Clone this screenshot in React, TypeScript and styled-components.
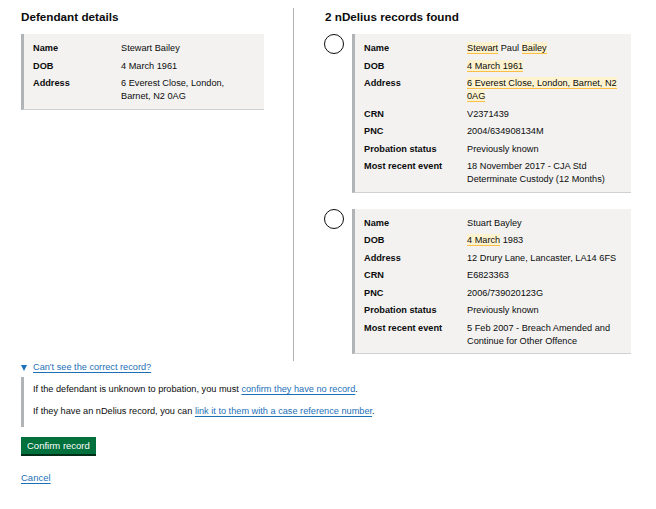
import React from "react";
import styled, { createGlobalStyle } from "styled-components";

const Global = createGlobalStyle`
  html, body { margin: 0; padding: 0; background: #ffffff; }
  body {
    font-family: "Liberation Sans", Arial, sans-serif;
    color: #0b0c0c;
    -webkit-font-smoothing: antialiased;
  }
`;

const Page = styled.div`
  padding: 8px 25px 24px 21px;
`;

const Columns = styled.div`
  display: grid;
  grid-template-columns: 273px 1fr;
`;

const LeftColumn = styled.section`
  border-right: 1px solid #b1b4b6;
  padding-right: 29px;
  padding-bottom: 7px;
`;

const RightColumn = styled.section`
  padding-left: 31px;
  padding-bottom: 7px;
`;

const Heading = styled.h2`
  margin: 0 0 8px;
  font-size: 11.7px;
  line-height: 18px;
  font-weight: 700;
`;

const Card = styled.div`
  background: #f3f2f1;
  border-left: 3px solid #b1b4b6;
  border-bottom: 1px solid #cfd0d1;
  padding: 6px 10px 3px 9px;
`;

const RecordList = styled.div`
  display: flex;
  flex-direction: column;
  gap: 16px;
`;

const RecordOption = styled.label`
  display: flex;
  align-items: flex-start;
  margin-left: -1px;
  gap: 8px;
`;

const Radio = styled.span`
  flex: none;
  width: 20px;
  height: 20px;
  border: 1.5px solid #0b0c0c;
  border-radius: 50%;
  box-sizing: border-box;
  background: #fff;
`;

const RecordCard = styled(Card)`
  flex: 1;
`;

const Table = styled.dl<{ $label: number }>`
  display: grid;
  grid-template-columns: ${(p) => p.$label}px 1fr;
  margin: 0;
  font-size: 9.2px;
  line-height: 13px;
`;

const Term = styled.dt`
  font-weight: 700;
  padding: 2px 0 2.5px;
`;

const Desc = styled.dd`
  margin: 0;
  padding: 2px 0 2.5px;
`;

const Mark = styled.mark`
  background: #fff3cf;
  color: inherit;
  border-bottom: 1.5px solid #ffbf47;
  padding: 1px 0 0;
`;

const Details = styled.details`
  font-size: 9.2px;
  line-height: 13px;
`;

const Summary = styled.summary`
  list-style: none;
  display: flex;
  align-items: center;
  gap: 6px;
  cursor: pointer;
  &::-webkit-details-marker { display: none; }
  &::before {
    content: "";
    width: 0;
    height: 0;
    border-left: 3.5px solid transparent;
    border-right: 3.5px solid transparent;
    border-top: 6px solid #1d70b8;
  }
`;

const Link = styled.a`
  color: #1d70b8;
  text-decoration: underline;
  text-underline-offset: 1.5px;
  text-decoration-thickness: 1px;
`;

const DetailsBody = styled.div`
  margin-top: 2.5px;
  border-left: 3px solid #b1b4b6;
  padding: 6.5px 0 8.5px 9px;
  display: flex;
  flex-direction: column;
  gap: 9px;
`;

const Para = styled.p`
  margin: 0;
`;

const Actions = styled.div`
  margin-top: 10px;
  display: flex;
  flex-direction: column;
  align-items: flex-start;
  gap: 15px;
`;

const Button = styled.button`
  font-family: inherit;
  font-size: 9.5px;
  line-height: 13px;
  color: #fff;
  background: #00703c;
  border: 0;
  border-radius: 0;
  padding: 2px 6px 2px;
  box-shadow: 0 2px 0 #002d18;
  margin-bottom: 2px;
`;

const CancelLink = styled(Link)`
  font-size: 9.5px;
  line-height: 13px;
`;

type Row = { label: string; value: React.ReactNode };

const DataTable = ({ rows, label }: { rows: Row[]; label: number }) => (
  <Table $label={label}>
    {rows.map((r) => (
      <React.Fragment key={r.label}>
        <Term>{r.label}</Term>
        <Desc>{r.value}</Desc>
      </React.Fragment>
    ))}
  </Table>
);

const defendant: Row[] = [
  { label: "Name", value: "Stewart Bailey" },
  { label: "DOB", value: "4 March 1961" },
  { label: "Address", value: <>6 Everest Close, London,<br />Barnet, N2 0AG</> },
];

const records: Row[][] = [
  [
    { label: "Name", value: <><Mark>Stewart</Mark> Paul <Mark>Bailey</Mark></> },
    { label: "DOB", value: <Mark>4 March 1961</Mark> },
    { label: "Address", value: <><Mark>6 Everest Close, London, Barnet, N2</Mark><br /><Mark>0AG</Mark></> },
    { label: "CRN", value: "V2371439" },
    { label: "PNC", value: "2004/634908134M" },
    { label: "Probation status", value: "Previously known" },
    { label: "Most recent event", value: <>18 November 2017 - CJA Std<br />Determinate Custody (12 Months)</> },
  ],
  [
    { label: "Name", value: "Stuart Bayley" },
    { label: "DOB", value: <><Mark>4 March</Mark> 1983</> },
    { label: "Address", value: "12 Drury Lane, Lancaster, LA14 6FS" },
    { label: "CRN", value: "E6823363" },
    { label: "PNC", value: "2006/739020123G" },
    { label: "Probation status", value: "Previously known" },
    { label: "Most recent event", value: <>5 Feb 2007 - Breach Amended and<br />Continue for Other Offence</> },
  ],
];

export default function App() {
  return (
    <>
      <Global />
      <Page>
        <Columns>
          <LeftColumn>
            <Heading>Defendant details</Heading>
            <Card>
              <DataTable rows={defendant} label={88} />
            </Card>
          </LeftColumn>
          <RightColumn>
            <Heading>2 nDelius records found</Heading>
            <RecordList>
              {records.map((rows, i) => (
                <RecordOption key={i}>
                  <Radio />
                  <RecordCard>
                    <DataTable rows={rows} label={103} />
                  </RecordCard>
                </RecordOption>
              ))}
            </RecordList>
          </RightColumn>
        </Columns>
        <Details open>
          <Summary>
            <Link href="#">Can't see the correct record?</Link>
          </Summary>
          <DetailsBody>
            <Para>
              If the defendant is unknown to probation, you must{" "}
              <Link href="#">confirm they have no record</Link>.
            </Para>
            <Para>
              If they have an nDelius record, you can{" "}
              <Link href="#">link it to them with a case reference number</Link>.
            </Para>
          </DetailsBody>
        </Details>
        <Actions>
          <Button>Confirm record</Button>
          <CancelLink href="#">Cancel</CancelLink>
        </Actions>
      </Page>
    </>
  );
}
